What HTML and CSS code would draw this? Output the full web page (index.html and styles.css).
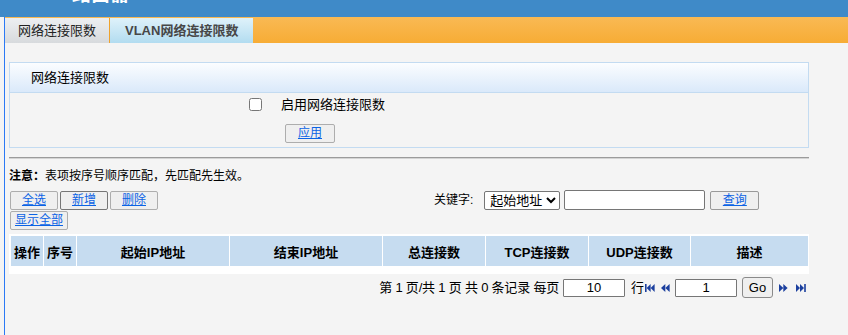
FILE: index.html
```html
<!DOCTYPE html>
<html lang="zh-CN">
<head>
<meta charset="utf-8">
<title>网络连接限数</title>
<link rel="stylesheet" href="styles.css">
</head>
<body>
<div class="topbar"><span class="brand">路由器</span></div>
<div class="frame">
  <div class="tabbar">
    <div class="tab tab-active">网络连接限数</div>
    <div class="tab tab-other">VLAN网络连接限数</div>
  </div>
  <div class="content">
    <div class="panel">
      <div class="panel-head">网络连接限数</div>
      <div class="panel-body">
        <div class="check-row">
          <input type="checkbox" class="check" id="enable">
          <label for="enable" class="check-label">启用网络连接限数</label>
        </div>
        <div class="apply-row"><button class="btn btn-apply">应用</button></div>
      </div>
    </div>
    <div class="rule"></div>
    <div class="note"><b>注意：</b>表项按序号顺序匹配，先匹配先生效。</div>
    <div class="toolbar">
      <div class="btn-group">
        <button class="btn btn-sm">全选</button>
        <button class="btn btn-sm btn-focus">新增</button>
        <button class="btn btn-sm">删除</button>
      </div>
      <div class="keyword">
        <span class="kw-label">关键字:</span>
        <select class="kw-select"><option>起始地址</option></select>
        <input type="text" class="kw-input">
        <button class="btn btn-query">查询</button>
      </div>
    </div>
    <div class="show-row"><button class="btn btn-all">显示全部</button></div>
    <table class="list">
      <tr class="head">
        <th class="c1">操作</th>
        <th class="c2">序号</th>
        <th class="c3">起始IP地址</th>
        <th class="c4">结束IP地址</th>
        <th class="c5">总连接数</th>
        <th class="c6">TCP连接数</th>
        <th class="c7">UDP连接数</th>
        <th class="c8">描述</th>
      </tr>
      <tr class="empty"><td colspan="8"></td></tr>
    </table>
    <div class="pager">
      <span class="pg-text">第 1 页/共 1 页 共 0 条记录 每页</span>
      <input type="text" class="pg-input" value="10">
      <span class="pg-row">行</span>
      <svg class="ico ico-first" width="10" height="8" viewBox="0 0 10 8"><rect x="0" y="0" width="1.6" height="8"/><polygon points="1.6,4 5.6,0 5.6,8"/><polygon points="5.6,4 9.6,0 9.6,8"/></svg>
      <svg class="ico ico-prev" width="9" height="8" viewBox="0 0 9 8"><polygon points="0,4 4.3,0 4.3,8"/><polygon points="4.3,4 8.6,0 8.6,8"/></svg>
      <input type="text" class="pg-input pg-page" value="1">
      <button class="go">Go</button>
      <svg class="ico ico-next" width="9" height="8" viewBox="0 0 9 8"><polygon points="0,0 4.3,4 0,8"/><polygon points="4.3,0 8.6,4 4.3,8"/></svg>
      <svg class="ico ico-last" width="10" height="8" viewBox="0 0 10 8"><polygon points="0,0 4,4 0,8"/><polygon points="4,0 8,4 4,8"/><rect x="8.2" y="0" width="1.6" height="8"/></svg>
    </div>
  </div>
</div>
</body>
</html>
```
FILE: styles.css
```css
html, body {
  margin: 0;
  padding: 0;
}
body {
  background: #F4F4F4;
  font-family: "Liberation Sans", "Noto Sans CJK SC", sans-serif;
  font-size: 12px;
  color: #000;
  overflow: hidden;
}
.topbar {
  height: 17px;
  background: #3F8AC8;
  overflow: hidden;
}
.brand {
  display: block;
  margin: -15px 0 0 72px;
  color: #fff;
  font-size: 19px;
  line-height: 19px;
  font-weight: bold;
}
.frame {
  margin-left: 4px;
  border-left: 1px solid #2B79F5;
  height: 318px;
}
.tabbar {
  height: 26px;
  background: linear-gradient(#F9B954, #F7AC35);
  display: flex;
  align-items: flex-end;
}
.tab {
  height: 25px;
  line-height: 25px;
  font-size: 13px;
  padding: 0 13px;
  box-sizing: border-box;
}
.tab-active {
  width: 105px;
  background: linear-gradient(#EDEFF1, #D7DADD);
  color: #222;
  border-right: 1px solid #EFA22C;
}
.tab-other {
  width: 143px;
  background: linear-gradient(#DFF2FA, #B2DCF0);
  color: #474747;
  font-weight: bold;
  padding: 0 0 0 15px;
}
.content {
  padding: 19px 0 0 4px;
  width: 800px;
}
.panel {
  border: 1px solid #C3DBF1;
}
.panel-head {
  height: 29px;
  line-height: 29px;
  padding-left: 21px;
  font-size: 13px;
  background: linear-gradient(#FBFDFF, #DAE9FA);
  border-bottom: 1px solid #C3DBF1;
}
.panel-body {
  padding: 3px 0 4px;
}
.check-row {
  height: 17px;
  display: flex;
  align-items: center;
  padding-left: 239px;
  font-size: 13px;
}
.check {
  margin: 0;
  width: 13px;
  height: 13px;
}
.check-label {
  margin-left: 19px;
  line-height: 17px;
}
.apply-row {
  margin-top: 11px;
  padding-left: 275px;
  display: flex;
}
.btn {
  height: 19px;
  box-sizing: border-box;
  border: 1px solid #ADADAD;
  border-radius: 2px;
  background: #EFEFEF;
  color: #0B63E5;
  text-decoration: underline;
  font-family: "Liberation Sans", "Noto Sans CJK SC", sans-serif;
  font-size: 12px;
  line-height: 17px;
  padding: 0;
  margin: 0;
}
.btn-apply {
  width: 50px;
}
.rule {
  margin-top: 9px;
  height: 0;
  border-top: 1px solid #9B9B9B;
  border-bottom: 1px solid #D4D4D4;
}
.note {
  margin-top: 9px;
  line-height: 16px;
  padding-left: 0;
}
.toolbar {
  margin-top: 6px;
  display: grid;
  grid-template-columns: 425px 1fr;
  align-items: center;
  height: 20px;
}
.btn-group {
  display: flex;
  gap: 2px;
  padding-left: 1px;
}
.btn-sm {
  width: 48px;
}
.btn-focus {
  border-color: #767676;
}
.keyword {
  display: flex;
  align-items: center;
}
.kw-label {
  margin-right: 11px;
  line-height: 16px;
}
.kw-select {
  width: 76px;
  height: 19px;
  box-sizing: border-box;
  font-family: "Liberation Sans", "Noto Sans CJK SC", sans-serif;
  font-size: 13px;
  border: 1px solid #767676;
  border-radius: 2px;
  background: #fff;
  padding: 0 0 0 1px;
  margin: 0 4px 0 0;
}
.kw-input {
  width: 141px;
  height: 20px;
  box-sizing: border-box;
  border: 1px solid #767676;
  border-radius: 2px;
  background: #fff;
  margin: 0 5px 0 0;
  padding: 0 2px;
}
.btn-query {
  width: 49px;
  border-color: #999;
}
.show-row {
  margin-top: 1px;
  padding-left: 1px;
  display: flex;
}
.btn-all {
  width: 58px;
}
.list {
  margin-top: 4px;
  width: 800px;
  box-sizing: border-box;
  background: #fff;
  border-collapse: separate;
  border-spacing: 1px;
  padding: 1px 0 0 1px;
  table-layout: fixed;
}
.list th {
  height: 30px;
  padding: 0;
  background: #C6DCF0;
  font-size: 13px;
  font-weight: bold;
  text-align: center;
  color: #000;
}
.c1 { width: 32px; }
.c2 { width: 32px; }
.c3 { width: 152px; }
.c4 { width: 152px; }
.c5 { width: 102px; }
.c6 { width: 102px; }
.c7 { width: 101px; }
.c8 { width: 117px; }
.empty td {
  height: 6px;
  padding: 0;
}
.pager {
  margin-top: 3px;
  height: 21px;
  display: flex;
  justify-content: flex-end;
  align-items: center;
  padding-right: 3px;
  font-size: 13px;
}
.pg-text {
  margin-right: 4px;
  line-height: 16px;
  letter-spacing: -0.2px;
}
.pg-input {
  width: 62px;
  height: 18px;
  box-sizing: border-box;
  border: 1px solid #767676;
  border-radius: 1px;
  background: #fff;
  text-align: center;
  font-family: "Liberation Sans", "Noto Sans CJK SC", sans-serif;
  font-size: 13px;
  padding: 0;
  margin: 0;
}
.pg-row {
  margin-left: 6px;
  line-height: 16px;
}
.ico {
  fill: #1B3F9E;
  display: block;
}
.ico-first { margin-left: 1px; }
.ico-prev { margin-left: 6px; margin-right: 5px; }
.go {
  width: 31px;
  height: 21px;
  box-sizing: border-box;
  border: 1px solid #8A8A8A;
  border-radius: 3px;
  background: #EFEFEF;
  font-family: "Liberation Sans", "Noto Sans CJK SC", sans-serif;
  font-size: 13px;
  color: #000;
  padding: 0;
  margin: 0 6px 0 5px;
}
.ico-next { margin-right: 8px; }
```
